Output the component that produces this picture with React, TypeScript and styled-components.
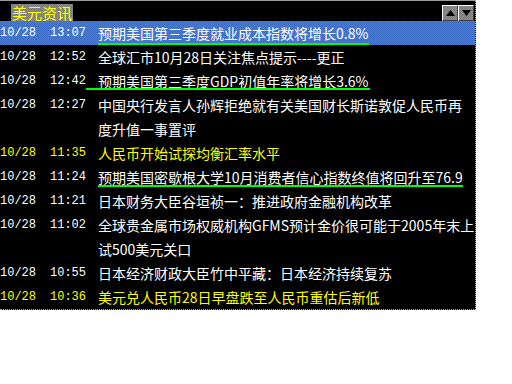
import React from 'react';
import styled, { createGlobalStyle, css } from 'styled-components';

const GlobalStyle = createGlobalStyle`
  html, body {
    margin: 0;
    padding: 0;
    background: #ffffff;
  }
  body {
    font-family: "Noto Sans CJK SC", "Liberation Sans", sans-serif;
    font-size: 14px;
  }
`;

type Tone = 'white' | 'yellow';

type Mark = {
  bottom: number;
  lead?: number;
  trail?: number;
};

type NewsItem = {
  date: string;
  time: string;
  lines: string[];
  tone: Tone;
  selected?: boolean;
  mark?: Mark;
};

const news: NewsItem[] = [
  {
    date: '10/28',
    time: '13:07',
    lines: ['预期美国第三季度就业成本指数将增长0.8%'],
    tone: 'white',
    selected: true,
    mark: { bottom: 0, trail: 1 },
  },
  { date: '10/28', time: '12:52', lines: ['全球汇市10月28日关注焦点提示----更正'], tone: 'white' },
  {
    date: '10/28',
    time: '12:42',
    lines: ['预期美国第三季度GDP初值年率将增长3.6%'],
    tone: 'white',
    mark: { bottom: 3, lead: 12, trail: 2 },
  },
  {
    date: '10/28',
    time: '12:27',
    lines: ['中国央行发言人孙辉拒绝就有关美国财长斯诺敦促人民币再', '度升值一事置评'],
    tone: 'white',
  },
  { date: '10/28', time: '11:35', lines: ['人民币开始试探均衡汇率水平'], tone: 'yellow' },
  {
    date: '10/28',
    time: '11:24',
    lines: ['预期美国密歇根大学10月消费者信心指数终值将回升至76.9'],
    tone: 'white',
    mark: { bottom: 2 },
  },
  { date: '10/28', time: '11:21', lines: ['日本财务大臣谷垣祯一：推进政府金融机构改革'], tone: 'white' },
  {
    date: '10/28',
    time: '11:02',
    lines: ['全球贵金属市场权威机构GFMS预计金价很可能于2005年末上', '试500美元关口'],
    tone: 'white',
  },
  { date: '10/28', time: '10:55', lines: ['日本经济财政大臣竹中平藏：日本经济持续复苏'], tone: 'white' },
  { date: '10/28', time: '10:36', lines: ['美元兑人民币28日早盘跌至人民币重估后新低'], tone: 'yellow' },
];

const Panel = styled.div`
  box-sizing: border-box;
  width: 476px;
  height: 310px;
  overflow: hidden;
  background: #000000;
  border-top: 1px solid #9a9a9a;
  border-right: 1px dotted #b8b49c;
  border-bottom: 1px dotted #b8b49c;
  display: flex;
  flex-direction: column;
`;

const Header = styled.div`
  height: 22px;
  display: flex;
  align-items: flex-start;
  justify-content: space-between;
  padding: 0 1px 0 11px;
`;

const dither = (a: string, b: string) => css`
  background-color: ${a};
  background-image: repeating-conic-gradient(${a} 0 25%, ${b} 0 50%);
  background-size: 2px 2px;
`;

const Title = styled.div`
  ${dither('#7a7a7a', '#8c8c8c')};
  color: #ffff00;
  font-size: 15px;
  line-height: 17px;
  padding: 0 1px;
  margin-top: 3px;
`;

const ScrollButtons = styled.div`
  display: flex;
  margin-top: 4px;
`;

const ScrollButton = styled.button`
  ${dither('#7c7c7c', '#8e8e8e')};
  box-sizing: border-box;
  width: 16px;
  height: 16px;
  padding: 0;
  border: 1px solid;
  border-color: #ffffff #404040 #404040 #ffffff;
  display: flex;
  align-items: center;
  justify-content: center;
`;

const List = styled.div`
  display: flex;
  flex-direction: column;
`;

const Row = styled.div<{ $tone: Tone; $selected?: boolean }>`
  display: grid;
  grid-template-columns: 50px 48px 1fr;
  line-height: 24px;
  color: ${(p) => (p.$tone === 'yellow' ? '#ffff00' : '#ffffff')};
  ${(p) => p.$selected && dither('#3a6cc6', '#4a7ed2')};
`;

const Stamp = styled.span`
  font-family: "Liberation Mono", "DejaVu Sans Mono", monospace;
  font-size: 12px;
  white-space: nowrap;
`;

const Headline = styled.span`
  white-space: nowrap;
`;

const Marked = styled.span<{ $bottom: number; $lead: number; $trail: number }>`
  display: inline-block;
  vertical-align: top;
  position: relative;

  &::after {
    content: '';
    position: absolute;
    left: ${(p) => -p.$lead}px;
    right: ${(p) => -p.$trail}px;
    bottom: ${(p) => p.$bottom}px;
    height: 2px;
    background: #00ff00;
  }
`;

const Arrow = ({ up }: { up?: boolean }) => (
  <svg width='9' height='6' viewBox='0 0 9 6'>
    <polygon points={up ? '4.5,0 9,6 0,6' : '0,0 9,0 4.5,6'} fill='#000000' />
  </svg>
);

const NewsRow = ({ item }: { item: NewsItem }) => {
  const { mark } = item;
  return (
    <Row $tone={item.tone} $selected={item.selected}>
      <Stamp>{item.date}</Stamp>
      <Stamp>{item.time}</Stamp>
      <Headline>
        {mark ? (
          <Marked $bottom={mark.bottom} $lead={mark.lead ?? 0} $trail={mark.trail ?? 0}>
            {item.lines[0]}
          </Marked>
        ) : (
          item.lines.map((line, i) => (
            <React.Fragment key={line}>
              {i > 0 && <br />}
              {line}
            </React.Fragment>
          ))
        )}
      </Headline>
    </Row>
  );
};

export default function App() {
  return (
    <>
      <GlobalStyle />
      <Panel>
        <Header>
          <Title>美元资讯</Title>
          <ScrollButtons>
            <ScrollButton>
              <Arrow up />
            </ScrollButton>
            <ScrollButton>
              <Arrow />
            </ScrollButton>
          </ScrollButtons>
        </Header>
        <List>
          {news.map((item) => (
            <NewsRow key={item.time} item={item} />
          ))}
        </List>
      </Panel>
    </>
  );
}
